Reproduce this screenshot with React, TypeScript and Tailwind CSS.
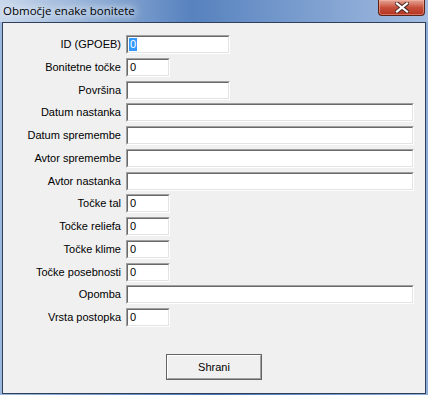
import React from "react";

type Field = { label: string; size: "s" | "m" | "l"; value?: string; selected?: boolean };

const fields: Field[] = [
  { label: "ID (GPOEB)", size: "m", value: "0", selected: true },
  { label: "Bonitetne točke", size: "s", value: "0" },
  { label: "Površina", size: "m" },
  { label: "Datum nastanka", size: "l" },
  { label: "Datum spremembe", size: "l" },
  { label: "Avtor spremembe", size: "l" },
  { label: "Avtor nastanka", size: "l" },
  { label: "Točke tal", size: "s", value: "0" },
  { label: "Točke reliefa", size: "s", value: "0" },
  { label: "Točke klime", size: "s", value: "0" },
  { label: "Točke posebnosti", size: "s", value: "0" },
  { label: "Opomba", size: "l" },
  { label: "Vrsta postopka", size: "s", value: "0" },
];

const widths = { s: "w-[44px]", m: "w-[104px]", l: "w-[288px]" };

function TextBox({ field }: { field: Field }) {
  return (
    <div
      className={`${widths[field.size]} h-[19px] border border-t-[#a0a0a0] border-l-[#a0a0a0] border-b-white border-r-white`}
    >
      <div className="flex h-full items-center border border-t-[#696969] border-l-[#696969] border-b-[#e3e3e3] border-r-[#e3e3e3] bg-white pl-[1px]">
        {field.value &&
          (field.selected ? (
            <span className="bg-[#3399ff] px-[1px] leading-[13px] text-white">{field.value}</span>
          ) : (
            <span className="px-[1px] leading-[13px]">{field.value}</span>
          ))}
      </div>
    </div>
  );
}

function CloseButton() {
  return (
    <div className="mr-[3px] flex h-[16px] w-[47px] items-center justify-center rounded-b-[4px] border border-t-0 border-[#5b2218] bg-gradient-to-b from-[#e4a597] via-[#c7503b] to-[#b4321e] shadow-[inset_0_0_0_1px_rgba(255,190,170,0.45)]">
      <svg width="14" height="11" viewBox="0 0 14 11">
        <path d="M2 1.5 L12 9.5 M12 1.5 L2 9.5" stroke="#4a2a26" strokeWidth="4.2" strokeLinecap="square" />
        <path d="M2 1.5 L12 9.5 M12 1.5 L2 9.5" stroke="#ffffff" strokeWidth="2.2" strokeLinecap="square" />
      </svg>
    </div>
  );
}

export default function App() {
  return (
    <div
      className="flex h-[395px] w-[428px] flex-col bg-gradient-to-r from-[#9db8de] via-[#4c78b6] to-[#8eaed8]"
      style={{ fontFamily: '"Liberation Sans", Arial, sans-serif' }}
    >
      {/* title bar */}
      <div className="flex h-[22px] shrink-0 items-start justify-between bg-gradient-to-r from-[#c9d8ec] via-[#5782be] via-45% to-[#a3bce0]">
        <span
          className="ml-[3px] mt-[3px] text-[11.5px] leading-[15px] text-black [text-shadow:0_0_6px_#eef3fa,0_0_10px_#e3ecf7,0_0_14px_#dfe8f5]"
          style={{ fontFamily: '"Open Sans", "Noto Sans", sans-serif' }}
        >
          Območje enake bonitete
        </span>
        <CloseButton />
      </div>

      {/* client area */}
      <div className="mx-[2px] mb-[1px] flex flex-1 flex-col border border-[#2f405c] bg-[#f0f0f0] pt-[12px] text-[11px] text-black">
        <div className="flex flex-col gap-[3.75px]">
          {fields.map((f) => (
            <div key={f.label} className="flex items-center">
              <div className="w-[118px] whitespace-nowrap text-right leading-[13px]">{f.label}</div>
              <div className="ml-[5px]">
                <TextBox field={f} />
              </div>
            </div>
          ))}
        </div>

        <div className="mt-[27px] flex justify-center">
          <div className="h-[26px] w-[96px] border border-[#646464]">
            <div className="flex h-full items-center justify-center border border-t-white border-l-white border-b-[#a0a0a0] border-r-[#a0a0a0] bg-[#f0f0f0]">
              Shrani
            </div>
          </div>
        </div>
      </div>
    </div>
  );
}
